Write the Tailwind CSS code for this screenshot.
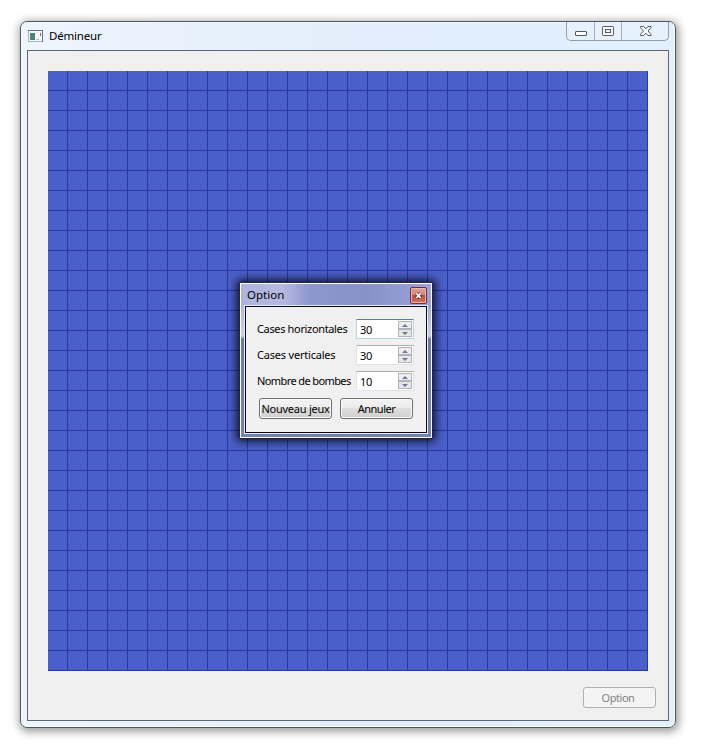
<!DOCTYPE html>
<html lang="fr">
<head>
<meta charset="utf-8">
<title>Démineur</title>
<script src="https://cdn.jsdelivr.net/npm/@tailwindcss/browser@4"></script>
</head>
<body class="bg-white w-[701px] h-[750px] overflow-hidden pl-[20px] pt-[21px] text-black font-['Noto_Sans',sans-serif] text-[11px] leading-[14px]">
<main class="relative w-[656px] h-[707px] rounded-[7px] border border-[#4c5662] bg-linear-to-r from-[#eef5fd] via-[#e2eefb] to-[#e2effd] shadow-[1px_2px_9px_2px_rgba(0,0,0,0.38),inset_0_0_0_1px_#f8fcff] px-[6px] pb-[6px] flex flex-col">
  <header class="h-[28px] shrink-0 flex items-start">
    <svg class="mt-[8px] ml-[1px] w-[15px] h-[12px] shrink-0" viewBox="0 0 15 12">
      <rect x=".5" y=".5" width="14" height="11" fill="#f6f8f9" stroke="#a9b1b8"/>
      <path d="M0 .5H15M14.5 0V12" stroke="#69727b"/>
      <rect x="2" y="3" width="5" height="7" fill="#4b8279"/>
      <path d="M8 9.5h3" stroke="#b8c0c8"/><path d="M12.5 3v3" stroke="#68707a"/>
    </svg>
    <h1 class="mt-[6px] ml-[6px] text-[11.5px] leading-[16px] tracking-[-0.2px]">Démineur</h1>
    <div class="ml-auto w-[103px] h-[19px] flex border border-t-0 border-[#929dab] rounded-b-[5px] bg-[#e9f2fc]/70">
      <div class="w-[28px] border-r border-[#a3afbd]"><svg class="w-[27px] h-[18px]" viewBox="0 0 27 18"><rect x="8.5" y="9.5" width="11" height="4" rx=".5" fill="#fff" stroke="#535666"/></svg></div>
      <div class="w-[27px] border-r border-[#a3afbd]"><svg class="w-[26px] h-[18px]" viewBox="0 0 26 18"><rect x="7.5" y="4.5" width="11" height="9" rx=".8" fill="#fff" stroke="#535666"/><rect x="10.5" y="7.5" width="5" height="3" fill="#eef4fc" stroke="#535666"/></svg></div>
      <div class="w-[46px]"><svg class="w-[46px] h-[18px]" viewBox="0 0 46 18"><path d="M18.5 4.5h3.2l2.1 2.4 2.1-2.4h3.1v1.2L26 9l3 3.3v1.2h-3.1l-2.1-2.4-2.1 2.4h-3.2v-1.2l3-3.3-3-3.3z" fill="#fff" stroke="#535666"/></svg></div>
    </div>
  </header>
  <section class="flex-1 w-[642px] border border-[#5d6672] bg-[#f0f0f0] pl-[20px] pt-[20px]">
    <div class="w-[600px] h-[600px] bg-[#4a5fc9] bg-[linear-gradient(to_right,transparent_19px,#2638a0_19px),linear-gradient(to_bottom,transparent_19px,#2638a0_19px)] bg-[size:20px_20px]"></div>
    <button class="block ml-[535px] mt-[16px] w-[73px] h-[21px] rounded-[3px] border border-[#adb2b5] bg-[#f4f4f4] text-[#838383] tracking-[-0.45px] pr-[3px] text-center">Option</button>
  </section>

  <section class="absolute left-[218px] top-[260px] w-[194px] h-[157px] border border-[#20253e] rounded-[2px] shadow-[0_0_9px_3px_rgba(0,0,10,0.75)]">
    <div class="w-full h-full border border-white bg-[linear-gradient(to_bottom,transparent_20px,#c9cfea_52px,#6c79ae_55px,#7582b5),linear-gradient(to_right,#aeb4dc,#b6bae0_22%,#8e98cf_36%,#8791ca_65%,#9ba4d7)] px-[3px] pb-[3px] flex flex-col">
      <header class="h-[21px] shrink-0 flex items-start">
        <h2 class="ml-[3px] mt-[3px] text-[11.5px] leading-[16px]">Option</h2>
        <div class="ml-auto mr-px mt-[3px] w-[17px] h-[17px] rounded-[2px] border border-[#792a32] bg-[linear-gradient(#dda59e,#cf8175_48%,#bd4b35_50%,#d8745d)] shadow-[inset_0_0_0_1px_#eab9ad]">
          <svg class="w-[15px] h-[15px]" viewBox="0 0 15 15"><path d="M5.4 5.4l4.2 4.6M9.6 5.4L5.4 10" stroke="#553947" stroke-width="3.4"/><path d="M5.4 5.4l4.2 4.6M9.6 5.4L5.4 10" stroke="#fff" stroke-width="1.7"/></svg>
        </div>
      </header>
      <div class="flex-1 border border-[#e7eaf7]">
        <div class="h-full w-full border border-[#080b15] bg-[#f0f0f0] pl-[11px] pt-[12px]">
          <div class="grid grid-cols-[99px_58px] gap-y-[6px]">
            <label class="h-[20px] pt-[3px] whitespace-nowrap tracking-[-0.35px]">Cases horizontales</label>
            <div class="h-[20px] flex border border-[#b4d5e9] border-t-[#4c83b3] bg-white pl-[3px] pt-[3px] tracking-[-0.3px]">30
              <svg class="ml-auto -mt-[2px] mr-px w-[14px] h-[16px]" viewBox="0 0 14 16"><rect x=".5" y=".5" width="13" height="7" fill="#eee" stroke="#b2b3b8"/><rect x=".5" y="8.5" width="13" height="7" fill="#e7e7e7" stroke="#b2b3b8"/><path d="M4 6l3-3 3 3zM4 11h6l-3 3z" fill="#6c76a4"/></svg></div>
            <label class="h-[20px] pt-[3px] whitespace-nowrap tracking-[-0.2px]">Cases verticales</label>
            <div class="h-[20px] flex border border-[#e0e3e8] border-t-[#abadb3] bg-white pl-[3px] pt-[3px] tracking-[-0.3px]">30
              <svg class="ml-auto -mt-[2px] mr-px w-[14px] h-[16px]" viewBox="0 0 14 16"><rect x=".5" y=".5" width="13" height="7" fill="#eee" stroke="#b2b3b8"/><rect x=".5" y="8.5" width="13" height="7" fill="#e7e7e7" stroke="#b2b3b8"/><path d="M4 6l3-3 3 3zM4 11h6l-3 3z" fill="#6c76a4"/></svg></div>
            <label class="h-[20px] pt-[3px] whitespace-nowrap tracking-[-0.6px]">Nombre de bombes</label>
            <div class="h-[20px] flex border border-[#e0e3e8] border-t-[#abadb3] bg-white pl-[3px] pt-[3px] tracking-[-0.3px]">10
              <svg class="ml-auto -mt-[2px] mr-px w-[14px] h-[16px]" viewBox="0 0 14 16"><rect x=".5" y=".5" width="13" height="7" fill="#eee" stroke="#b2b3b8"/><rect x=".5" y="8.5" width="13" height="7" fill="#e7e7e7" stroke="#b2b3b8"/><path d="M4 6l3-3 3 3zM4 11h6l-3 3z" fill="#6c76a4"/></svg></div>
          </div>
          <div class="flex gap-[8px] mt-[7px] ml-[2px]">
            <button class="w-[73px] h-[21px] rounded-[3px] border border-[#707070] bg-[linear-gradient(#f3f3f3_0,#ebebeb_50%,#dddddd_50%,#cfcfcf)] shadow-[inset_0_0_0_1px_#fafafa] whitespace-nowrap tracking-[-0.25px]">Nouveau jeux</button>
            <button class="w-[73px] h-[21px] rounded-[3px] border border-[#707070] bg-[linear-gradient(#f3f3f3_0,#ebebeb_50%,#dddddd_50%,#cfcfcf)] shadow-[inset_0_0_0_1px_#fafafa] whitespace-nowrap tracking-[-0.5px]">Annuler</button>
          </div>
        </div>
      </div>
    </div>
  </section>
</main>
</body>
</html>
